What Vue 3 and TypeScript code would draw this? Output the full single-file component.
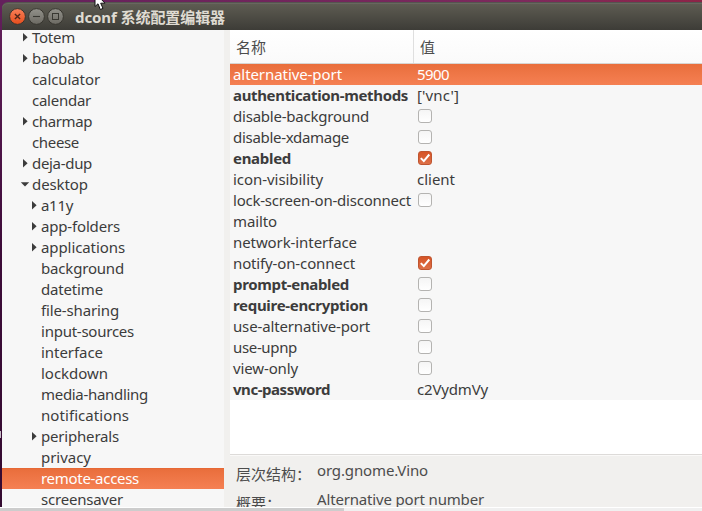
<script setup lang="ts">
interface TreeItem {
  name: string
  width: number
  level: number
  state?: 'open' | 'closed'
  selected?: boolean
}

interface Setting {
  name: string
  width: number
  value: string | boolean
  valueWidth?: number
  changed?: boolean
  selected?: boolean
}

const tree: TreeItem[] = [
  { name: 'Totem', width: 43, level: 0, state: 'closed' },
  { name: 'baobab', width: 52, level: 0, state: 'closed' },
  { name: 'calculator', width: 68, level: 0 },
  { name: 'calendar', width: 59, level: 0 },
  { name: 'charmap', width: 60, level: 0, state: 'closed' },
  { name: 'cheese', width: 47, level: 0 },
  { name: 'deja-dup', width: 60, level: 0, state: 'closed' },
  { name: 'desktop', width: 56, level: 0, state: 'open' },
  { name: 'a11y', width: 32, level: 1, state: 'closed' },
  { name: 'app-folders', width: 79, level: 1, state: 'closed' },
  { name: 'applications', width: 84, level: 1, state: 'closed' },
  { name: 'background', width: 83, level: 1 },
  { name: 'datetime', width: 62, level: 1 },
  { name: 'file-sharing', width: 78, level: 1 },
  { name: 'input-sources', width: 93, level: 1 },
  { name: 'interface', width: 62, level: 1 },
  { name: 'lockdown', width: 67, level: 1 },
  { name: 'media-handling', width: 107, level: 1 },
  { name: 'notifications', width: 88, level: 1 },
  { name: 'peripherals', width: 78, level: 1, state: 'closed' },
  { name: 'privacy', width: 50, level: 1 },
  { name: 'remote-access', width: 98, level: 1, selected: true },
  { name: 'screensaver', width: 82, level: 1 },
]

const settings: Setting[] = [
  { name: 'alternative-port', width: 109, value: '5900', valueWidth: 32, selected: true },
  { name: 'authentication-methods', width: 175, value: "['vnc']", valueWidth: 42, changed: true },
  { name: 'disable-background', width: 136, value: false },
  { name: 'disable-xdamage', width: 116, value: false },
  { name: 'enabled', width: 58, value: true, changed: true },
  { name: 'icon-visibility', width: 90, value: 'client', valueWidth: 38 },
  { name: 'lock-screen-on-disconnect', width: 178, value: false },
  { name: 'mailto', width: 44, value: '' },
  { name: 'network-interface', width: 124, value: '' },
  { name: 'notify-on-connect', width: 122, value: true },
  { name: 'prompt-enabled', width: 116, value: false, changed: true },
  { name: 'require-encryption', width: 135, value: false, changed: true },
  { name: 'use-alternative-port', width: 137, value: false },
  { name: 'use-upnp', width: 64, value: false },
  { name: 'view-only', width: 65, value: false },
  { name: 'vnc-password', width: 97, value: 'c2VydmVy', valueWidth: 71, changed: true },
]

// Tracks a label so that it fills its given width.
const vFit = {
  mounted(el: HTMLElement, binding: { value?: number }) {
    const length = el.textContent?.length ?? 0
    if (!binding.value || !length) return
    const natural = el.getBoundingClientRect().width
    el.style.letterSpacing = `${(binding.value - natural) / length}px`
  },
}
</script>

<template>
  <div class="desktop">
    <div class="window">
      <header class="titlebar">
        <svg class="buttons" width="62" height="20" viewBox="0 0 62 20">
          <defs>
            <linearGradient id="close" x1="0" y1="0" x2="0" y2="1">
              <stop offset="0" stop-color="#f88059" />
              <stop offset="1" stop-color="#e54d1c" />
            </linearGradient>
            <linearGradient id="grey" x1="0" y1="0" x2="0" y2="1">
              <stop offset="0" stop-color="#92918a" />
              <stop offset="1" stop-color="#6c6a63" />
            </linearGradient>
          </defs>
          <circle cx="9.5" cy="10.5" r="7.9" fill="url(#close)" stroke="#37352f" />
          <circle cx="28.5" cy="10.5" r="7.9" fill="url(#grey)" stroke="#37352f" />
          <circle cx="47.5" cy="10.5" r="7.9" fill="url(#grey)" stroke="#37352f" />
          <path d="M6.9 7.9l5.2 5.2m0-5.2l-5.2 5.2" stroke="#512619" stroke-width="1.4" />
          <path d="M25 10.5h7" stroke="#393832" stroke-width="1.1" />
          <rect x="44.5" y="7.5" width="6" height="6" fill="none" stroke="#393832" />
        </svg>
        <h1 v-fit="150" class="title">dconf 系统配置编辑器</h1>
      </header>

      <div class="content">
        <nav class="tree">
          <div
            v-for="item in tree"
            :key="item.name"
            class="node"
            :class="{ nested: item.level === 1, selected: item.selected }"
          >
            <svg class="arrow" width="10" height="11" viewBox="0 0 10 11">
              <path v-if="item.state === 'closed'" d="M3 1v8.4L7.6 5.2z" />
              <path v-else-if="item.state === 'open'" d="M.8 3.2h8.4L5 7.6z" />
            </svg>
            <span v-fit="item.width" class="label">{{ item.name }}</span>
          </div>
        </nav>

        <main class="pane">
          <div class="head">
            <div class="name">名称</div>
            <div class="value">值</div>
          </div>
          <div class="list">
            <div
              v-for="item in settings"
              :key="item.name"
              class="row"
              :class="{ selected: item.selected }"
            >
              <div class="name">
                <span v-fit="item.width" class="label" :class="{ bold: item.changed }">{{ item.name }}</span>
              </div>
              <div class="value">
                <span v-if="typeof item.value === 'string'" v-fit="item.valueWidth" class="label">{{ item.value }}</span>
                <span v-else class="check" :class="{ on: item.value }">
                  <svg v-if="item.value" width="14" height="14" viewBox="0 0 14 14">
                    <path d="M2.8 7.1l3 3 5.5-6.6" />
                  </svg>
                </span>
              </div>
            </div>
          </div>
          <dl class="details">
            <dt>层次结构：</dt>
            <dd><span v-fit="111" class="label">org.gnome.Vino</span></dd>
            <dt>概要：</dt>
            <dd><span v-fit="167" class="label">Alternative port number</span></dd>
          </dl>
        </main>
      </div>
    </div>
    <div class="scrollbar"><div class="thumb"></div></div>
    <div class="edge-mark"></div>
    <svg class="pointer" width="13" height="11" viewBox="0 0 13 11">
      <path d="M1 -5V6.5L4 3.8L6.3 9.5L9 8.4L6.7 3.2H11L3-5z" fill="#fff" stroke="#111" />
    </svg>
  </div>
</template>

<style>
body {
  overflow: hidden;
}
</style>

<style scoped>
.desktop {
  position: relative;
  display: flex;
  flex-direction: column;
  width: 702px;
  height: 511px;
  overflow: hidden;
  background: linear-gradient(90deg, #64205c, #7d2a5c 75%, #8d2447) top / 100% 10px no-repeat,
    linear-gradient(#64205c, #3c0b38 50%, #340b31);
  color: #3c3c3c;
  font: 15px/21px "Noto Sans", "Noto Sans CJK SC", sans-serif;
}

.window {
  display: flex;
  flex-direction: column;
  height: 505px;
  margin: 2px 0 0 2px;
}

.titlebar {
  display: flex;
  flex: none;
  align-items: flex-start;
  height: 28px;
  padding-left: 6px;
  box-sizing: border-box;
  border-top: 1px solid #55544f;
  border-radius: 6px 0 0 0;
  background: linear-gradient(#5f5d53, #3d3c37);
  box-shadow: inset 0 1px #68675f;
}

.buttons {
  flex: none;
  margin-top: 3px;
}

.title {
  margin: 3px 0 0 5px;
  color: #dfdbd2;
  font-size: 15px;
  font-weight: 700;
  line-height: 22px;
  white-space: nowrap;
}

.content {
  display: flex;
  height: 477px;
  background: #f1f0ee;
}

.tree {
  display: flex;
  flex: none;
  flex-direction: column;
  justify-content: flex-end;
  width: 222px;
  height: 480px;
  margin-right: 6px;
  overflow: hidden;
  background: #f7f7f7;
  clip-path: inset(0 0 3px);
}

.node {
  display: flex;
  flex: none;
  align-items: center;
  height: 21px;
  padding-left: 18px;
}

.nested {
  padding-left: 27px;
}

.arrow {
  flex: none;
  margin-right: 2px;
  fill: #3c3c3c;
}

.label {
  white-space: nowrap;
}

.bold {
  font-weight: 700;
}

.selected {
  background: linear-gradient(#e5632f, #e96e3c 1px, #f58053);
  color: #fff;
}

.pane {
  display: flex;
  flex: 1;
  flex-direction: column;
  min-width: 0;
}

.head {
  display: flex;
  flex: none;
  height: 34px;
  box-sizing: border-box;
  border-bottom: 1px solid #d7d5d3;
  background: linear-gradient(#fff, #fafafa);
  color: #4c4c4c;
  font-family: "Noto Sans CJK SC", sans-serif;
  line-height: 33px;
}

.name {
  flex: none;
  width: 184px;
  box-sizing: border-box;
  padding-left: 3px;
}

.head .name {
  padding-left: 6px;
  border-right: 1px solid #dfdfdf;
}

.value {
  display: flex;
  align-items: center;
  padding-left: 3px;
}

.head .value {
  padding-left: 6px;
}

.list {
  flex: none;
  height: 391px;
  box-sizing: border-box;
  border-bottom: 1px solid #dddbd9;
  background: #fff;
}

.row {
  display: flex;
  height: 21px;
  background: #f7f7f7;
}

.row.selected {
  background: linear-gradient(#e96e3c, #f58053);
}

.check {
  display: block;
  width: 14px;
  height: 14px;
  margin: 0 0 1px 1px;
  box-sizing: border-box;
  border: 1px solid #b4b3b1;
  border-radius: 3px;
  background: linear-gradient(#f5f5f5, #fff);
}

.check.on {
  border-color: #bf5530;
  background: linear-gradient(#d65426, #dd7048);
}

.check svg {
  display: block;
  margin: -1px;
  fill: none;
  stroke: #fff;
  stroke-width: 2;
}

.details {
  display: grid;
  flex: none;
  grid-template-columns: 81px 1fr;
  grid-auto-rows: 29px;
  height: 52px;
  margin: 0;
  padding: 4px 0 0 6px;
  box-sizing: border-box;
  border-top: 1px solid #faf9f8;
  overflow: hidden;
  color: #4c4c4c;
}

.details dt {
  padding-top: 3px;
  font-family: "Noto Sans CJK SC", sans-serif;
  white-space: nowrap;
}

.details dd {
  margin: 0;
}

.scrollbar {
  height: 3px;
  border-top: 1px solid #fff;
  background: #f0f0f0;
}

.thumb {
  width: 344px;
  height: 3px;
  background: #cdcdcd;
}

.edge-mark {
  position: absolute;
  top: 431px;
  left: 0;
  width: 1px;
  height: 7px;
  background: #c7bdc7;
}

.pointer {
  position: absolute;
  top: 0;
  left: 94px;
}
</style>
